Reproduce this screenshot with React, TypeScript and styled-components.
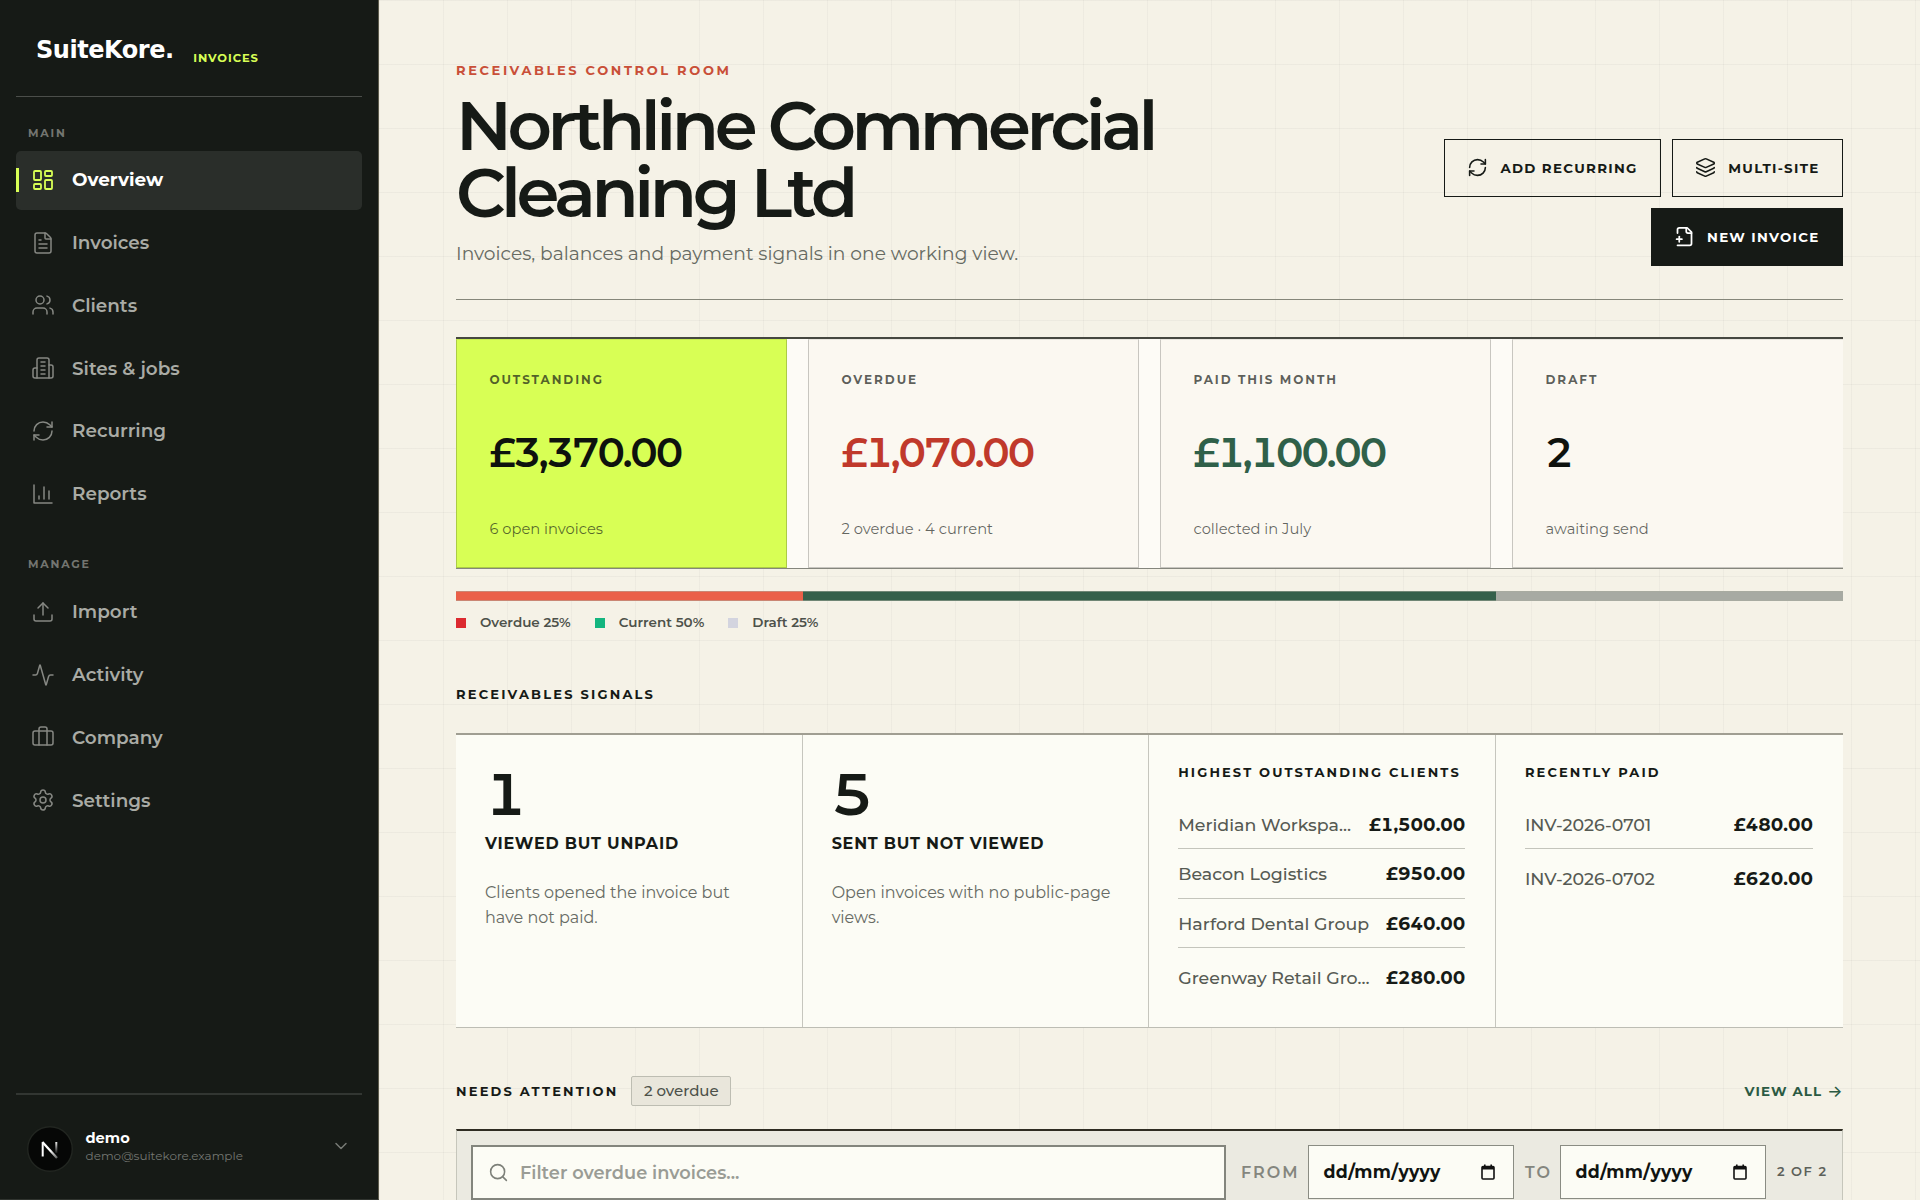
import React from "react";
import styled, { createGlobalStyle, css } from "styled-components";
import {
  Activity,
  ChevronDown,
  FileText,
  Layers,
  LayoutDashboard,
  RefreshCw,
  Search,
  Settings,
  Upload,
  Users,
} from "lucide-react";

const ink = "#161a16";
const paper = "#f5f2e7";
const lime = "#d8ff55";
const red = "#c0392b";
const green = "#2f6049";

const GlobalStyle = createGlobalStyle`
  *, *::before, *::after { box-sizing: border-box; }
  body {
    margin: 0;
    background: ${paper};
    color: ${ink};
    font-family: Montserrat, Inter, "Liberation Sans", sans-serif;
    overflow: hidden;
  }
  h1, h2, h3, p, ul { margin: 0; padding: 0; font: inherit; }
  ul { list-style: none; }
`;

const Shell = styled.div`
  display: grid;
  grid-template-columns: 379px 1fr;
  height: 1200px;
  overflow: hidden;
`;

/* ---------- sidebar ---------- */

const Sidebar = styled.aside`
  display: flex;
  flex-direction: column;
  padding: 0 16.5px 0 16px;
  background: ${ink};
  border-right: 1px solid #5d5b4c;
  border-bottom: 1px solid #30342f;
`;

const Brand = styled.div`
  display: flex;
  align-items: center;
  height: 97px;
  padding: 3px 0 0 20px;
  border-bottom: 1px solid #4b4e4a;
`;

const Wordmark = styled.span`
  font: 700 24px "DejaVu Sans", sans-serif;
  letter-spacing: -0.45px;
  color: #fff;
`;

const Product = styled.span`
  margin: 17px 0 0 19.5px;
  font-size: 11.5px;
  font-weight: 700;
  letter-spacing: 0.95px;
  color: ${lime};
`;

const Nav = styled.nav`
  display: flex;
  flex-direction: column;
`;

const NavHeading = styled.h2<{ $first?: boolean }>`
  margin: ${(p) => (p.$first ? "28px 0 9.5px 12px" : "33px 0 10.300px 12px")};
  font-size: 11px;
  font-weight: 700;
  line-height: 16px;
  letter-spacing: 1.8px;
  color: #737570;
`;

const NavList = styled.ul`
  display: flex;
  flex-direction: column;
  gap: 3.75px;
`;

const NavItem = styled.li<{ $active?: boolean }>`
  position: relative;
  display: flex;
  align-items: center;
  gap: 17px;
  height: 59px;
  padding: 0 0 0.5px 15px;
  border-radius: 5px;
  font-size: 18.4px;
  font-weight: 600;
  color: #a9aba5;

  svg {
    color: #868883;
  }

  ${(p) =>
    p.$active &&
    css`
      background: #2a2e2a;
      font-weight: 700;
      color: #fff;

      svg {
        color: ${lime};
      }

      &::before {
        content: "";
        position: absolute;
        left: 0;
        top: 17px;
        width: 3px;
        height: 24px;
        background: ${lime};
      }
    `}
`;

const Account = styled.div`
  display: flex;
  align-items: center;
  gap: 12.5px;
  height: 106px;
  margin-top: auto;
  padding: 3px 11px 0 11px;
  border-top: 2px solid #323632;
`;

const AccountText = styled.div`
  flex: 1;
  margin-top: -4px;
`;

const AccountName = styled.p`
  font-size: 14.6px;
  font-weight: 700;
  line-height: 18px;
  color: #fff;
`;

const AccountMail = styled.p`
  font-size: 12px;
  line-height: 18px;
  color: #747772;
`;

const Chevron = styled(ChevronDown)`
  margin-top: -6px;
  color: #777a75;
`;

/* ---------- main column ---------- */

const Main = styled.main`
  display: flex;
  flex-direction: column;
  padding: 61px 77.5px 0 77px;
  background-color: ${paper};
  background-image:
    linear-gradient(rgba(22, 26, 22, 0.035) 1px, transparent 1px),
    linear-gradient(90deg, rgba(22, 26, 22, 0.03) 1px, transparent 1px);
  background-size: 64px 64px;
  overflow: hidden;
`;

const PageHeader = styled.header`
  display: flex;
  flex: none;
  justify-content: space-between;
  align-items: flex-end;
  height: 239px;
  padding-bottom: 32px;
  border-bottom: 1px solid #85867a;
`;

const Titles = styled.div`
  width: 800px;
`;

const Eyebrow = styled.p`
  font-size: 13px;
  font-weight: 700;
  line-height: 18px;
  letter-spacing: 2.62px;
  color: #c94f38;
`;

const Title = styled.h1`
  margin-top: 13px;
  font-size: 69px;
  font-weight: 600;
  line-height: 67px;
  letter-spacing: -4.44px;
`;

const Subtitle = styled.p`
  margin: 14.5px 0 -1px;
  font-size: 18.65px;
  line-height: 28px;
  color: #666a62;
`;

const Actions = styled.div`
  display: flex;
  flex-wrap: wrap;
  justify-content: flex-end;
  gap: 11px;
  width: 430px;
  margin-bottom: 1px;
`;

const Button = styled.button<{ $solid?: boolean }>`
  display: flex;
  align-items: center;
  gap: 12px;
  height: 58px;
  padding: 0 22px 1px 22.5px;
  border: 1px solid ${ink};
  background: ${(p) => (p.$solid ? ink : "transparent")};
  font: 700 13.4px Montserrat, Inter, sans-serif;
  letter-spacing: 1.3px;
  color: ${(p) => (p.$solid ? "#fff" : ink)};
`;

/* ---------- stats ---------- */

const Stats = styled.section`
  display: grid;
  flex: none;
  grid-template-columns: repeat(4, 1fr);
  gap: 21.5px;
  height: 232px;
  margin-top: 37px;
  border-top: 2px solid #464740;
  border-bottom: 1px solid #85867d;
  background: #fdfbf6;
`;

const Stat = styled.article<{ $highlight?: boolean }>`
  padding: 30px 0 0 32.5px;
  border: 1px solid rgba(22, 26, 22, 0.22);
  border-top-color: rgba(22, 26, 22, 0.08);
  background: ${(p) => (p.$highlight ? lime : "#fbf8f1")};

  &:last-child {
    border-right: 0;
  }
`;

const StatLabel = styled.h3`
  font-size: 12px;
  font-weight: 700;
  line-height: 20px;
  letter-spacing: 1.95px;
  color: rgba(22, 26, 22, 0.7);
`;

const StatValue = styled.p<{ $tone?: string }>`
  margin-top: 38.7px;
  font-size: 40px;
  font-weight: 600;
  line-height: 48px;
  letter-spacing: -2.46px;
  font-variant-numeric: tabular-nums;
  color: ${(p) => p.$tone ?? "#0e120e"};
`;

const StatNote = styled.p`
  margin-top: 41px;
  font-size: 14.7px;
  line-height: 22px;
  color: rgba(22, 26, 22, 0.68);
`;

const SplitBar = styled.div`
  display: flex;
  flex: none;
  height: 10px;
  margin-top: 22px;
`;

const Split = styled.div<{ $share: number; $color: string }>`
  flex: ${(p) => p.$share};
  background: ${(p) => p.$color};
  border: solid rgba(170, 172, 160, 0.5);
  border-width: 1px 0;
`;

const Legend = styled.ul`
  display: flex;
  flex: none;
  gap: 24px;
  margin-top: 11px;
`;

const LegendItem = styled.li<{ $color: string }>`
  display: flex;
  align-items: center;
  gap: 14px;
  font-size: 13.5px;
  font-weight: 600;
  line-height: 20px;
  color: #4d514a;

  &::before {
    content: "";
    width: 10px;
    height: 10px;
    margin-top: 2px;
    background: ${(p) => p.$color};
  }
`;

/* ---------- signals ---------- */

const SectionTitle = styled.h2`
  font-size: 13px;
  font-weight: 700;
  line-height: 20px;
  letter-spacing: 2.2px;
`;

const SignalsTitle = styled(SectionTitle)`
  margin-top: 52px;
`;

const Signals = styled.section`
  display: grid;
  flex: none;
  grid-template-columns: repeat(4, 1fr);
  height: 295px;
  margin-top: 29px;
  border-top: 2px solid #a09e92;
  border-bottom: 1px solid #bdbdb4;
  background: #fcfcf5;
`;

const Signal = styled.article`
  min-width: 0;
  padding: 27px 29.5px 0 29px;
  border-right: 1px solid #c6c6be;

  &:last-child {
    border-right: 0;
  }
`;

const Count = styled.p`
  margin-top: 3px;
  font-size: 59px;
  font-weight: 600;
  line-height: 58px;
  font-variant-numeric: tabular-nums;
`;

const SignalName = styled.h3`
  margin-top: 9.5px;
  font-size: 16px;
  font-weight: 700;
  line-height: 22px;
  letter-spacing: 0.78px;
`;

const SignalText = styled.p`
  max-width: 283px;
  margin-top: 25px;
  font-size: 16px;
  line-height: 25.3px;
  color: #676b64;
`;

const ListTitle = styled(SectionTitle)`
  margin-bottom: 18px;
  letter-spacing: 2.12px;
  white-space: nowrap;
`;

const LedgerRow = styled.li`
  display: flex;
  align-items: center;
  justify-content: space-between;
  height: 49.4px;
  padding-top: 0.5px;
  border-bottom: 1px solid #c4c5bc;
  font-size: 17.4px;
  white-space: nowrap;

  &:last-child {
    height: 60.8px;
    padding: 0 0 2px;
    border-bottom: 0;
  }
`;

const LedgerName = styled.span`
  font-weight: 500;
  color: #565a53;
`;

const LedgerAmount = styled.strong`
  font-size: 17.9px;
  font-weight: 700;
  font-variant-numeric: tabular-nums;
`;

/* ---------- needs attention ---------- */

const AttentionHead = styled.div`
  display: flex;
  flex: none;
  align-items: center;
  height: 29px;
  margin-top: 48px;
`;

const Badge = styled.span`
  display: flex;
  align-items: center;
  height: 30px;
  margin-left: 13px;
  padding: 0 11.5px 1px;
  border: 1px solid #bdbdb2;
  border-radius: 2px;
  background: #e9e6db;
  font-size: 15px;
  font-weight: 500;
  color: #4d514a;
`;

const ViewAll = styled.a`
  display: flex;
  align-items: center;
  gap: 5px;
  margin-left: auto;
  font-size: 13.4px;
  font-weight: 700;
  letter-spacing: 1.1px;
  color: #2b5a43;
`;

const Arrow = styled.span`
  font: 500 16px/16px Inter, sans-serif;
  letter-spacing: 0;
`;

const FilterPanel = styled.section`
  display: flex;
  flex: none;
  align-items: flex-start;
  height: 120px;
  margin-top: 24px;
  padding: 13.5px 14px 0;
  border: 1px solid #c6c6bb;
  border-top: 2px solid #2f2c22;
  background: #ebeae1;
`;

const SearchBox = styled.label`
  display: flex;
  flex: 1;
  align-items: center;
  gap: 11px;
  height: 55px;
  padding-left: 15px;
  border: 2px solid #83857d;
  background: #fcfcf5;
  font-size: 17.8px;
  font-weight: 600;
  color: #9a9c95;

  svg {
    color: #7d8079;
  }
`;

const RangeLabel = styled.span<{ $width: number; $inset?: number }>`
  width: ${(p) => p.$width}px;
  padding-left: ${(p) => p.$inset ?? 0}px;
  font-size: 16px;
  font-weight: 600;
  line-height: 55px;
  letter-spacing: 1.95px;
  color: #84867e;
`;

const DateField = styled.div`
  display: flex;
  align-items: center;
  justify-content: space-between;
  width: 206px;
  height: 54px;
  margin-right: 11px;
  padding: 0 18px 0 14.5px;
  border: 1px solid #8a8c83;
  background: #fcfcf5;
  font-size: 17.3px;
  font-weight: 700;
  letter-spacing: 0.4px;
  color: #111411;
`;

const Tally = styled.span`
  font-size: 13px;
  font-weight: 600;
  line-height: 53px;
  letter-spacing: 1.5px;
  color: #5d615a;
`;

/* ---------- drawings ---------- */

type GlyphProps = { paths: string[]; size: number; children?: React.ReactNode; width?: number };

const Glyph = ({ paths, size, children, width = 1.5 }: GlyphProps) => (
  <svg
    width={size}
    height={size}
    viewBox="0 0 24 24"
    fill="none"
    stroke="currentColor"
    strokeWidth={width}
    strokeLinecap="round"
    strokeLinejoin="round"
  >
    {children}
    {paths.map((d) => (
      <path key={d} d={d} />
    ))}
  </svg>
);

const BuildingIcon = () => (
  <Glyph
    size={24}
    paths={[
      "M6 22V4a2 2 0 0 1 2-2h8a2 2 0 0 1 2 2v18Z",
      "M6 12H4a2 2 0 0 0-2 2v6a2 2 0 0 0 2 2h2",
      "M18 9h2a2 2 0 0 1 2 2v9a2 2 0 0 1-2 2h-2",
      "M10 6h4",
      "M10 10h4",
      "M10 14h4",
      "M10 18h4",
    ]}
  />
);

const ChartIcon = () => (
  <Glyph size={24} paths={["M3 3v18h18", "M18 17V9", "M13 17V5", "M8 17v-3"]} />
);

const CaseIcon = () => (
  <Glyph size={24} paths={["M16 20V4a2 2 0 0 0-2-2h-4a2 2 0 0 0-2 2v16"]}>
    <rect x="2" y="6" width="20" height="14" rx="2" />
  </Glyph>
);

const FilePlusIcon = () => (
  <Glyph
    size={21}
    width={2}
    paths={[
      "M4 22h14a2 2 0 0 0 2-2V7l-5-5H6a2 2 0 0 0-2 2v4",
      "M14 2v4a2 2 0 0 0 2 2h4",
      "M3 15h6",
      "M6 12v6",
    ]}
  />
);

const CalendarIcon = () => (
  <svg width="14" height="16" viewBox="0 0 14 16" fill="none">
    <rect x="1" y="2.5" width="12" height="12.5" rx="1" stroke="#111" strokeWidth="1.6" />
    <path d="M1 2h12v3.500H1zM3 .5h1.600V3H3zM9.400 .5H11V3H9.400z" fill="#111" />
  </svg>
);

const AvatarMark = () => (
  <svg width="46" height="46" viewBox="0 0 46 46" fill="none">
    <defs>
      <linearGradient id="fadeDown" x1="0" y1="15" x2="0" y2="28" gradientUnits="userSpaceOnUse">
        <stop stopColor="#fff" />
        <stop offset="1" stopColor="#fff" stopOpacity="0" />
      </linearGradient>
      <linearGradient id="fadeDiagonal" x1="24" y1="24" x2="32" y2="34" gradientUnits="userSpaceOnUse">
        <stop stopColor="#fff" />
        <stop offset="1" stopColor="#fff" stopOpacity="0.2" />
      </linearGradient>
    </defs>
    <circle cx="23" cy="23" r="22.3" fill="#060706" stroke="#222621" strokeWidth="1.4" />
    <path d="M15.700 30.500v-14" stroke="#fff" strokeWidth="2" />
    <path d="M15.400 16 30 32" stroke="url(#fadeDiagonal)" strokeWidth="2.3" />
    <path d="M29.300 16v11" stroke="url(#fadeDown)" strokeWidth="2" />
  </svg>
);

/* ---------- data ---------- */

const thin = { size: 24, strokeWidth: 1.5 };

const mainLinks = [
  { label: "Overview", icon: <LayoutDashboard size={24} strokeWidth={1.8} />, active: true },
  { label: "Invoices", icon: <FileText {...thin} /> },
  { label: "Clients", icon: <Users {...thin} /> },
  { label: "Sites & jobs", icon: <BuildingIcon /> },
  { label: "Recurring", icon: <RefreshCw {...thin} /> },
  { label: "Reports", icon: <ChartIcon /> },
];

const manageLinks = [
  { label: "Import", icon: <Upload {...thin} /> },
  { label: "Activity", icon: <Activity {...thin} /> },
  { label: "Company", icon: <CaseIcon /> },
  { label: "Settings", icon: <Settings {...thin} /> },
];

const stats = [
  { label: "OUTSTANDING", value: "£3,370.00", note: "6 open invoices", highlight: true },
  { label: "OVERDUE", value: "£1,070.00", note: "2 overdue · 4 current", tone: red },
  { label: "PAID THIS MONTH", value: "£1,100.00", note: "collected in July", tone: green },
  { label: "DRAFT", value: "2", note: "awaiting send" },
];

const split = [
  { label: "Overdue", share: 25, bar: "#ea6049", key: "#dc2a30" },
  { label: "Current", share: 50, bar: "#35604b", key: "#14b57f" },
  { label: "Draft", share: 25, bar: "#a7aaa3", key: "#d3d4df" },
];

const clients = [
  ["Meridian Workspa…", "£1,500.00"],
  ["Beacon Logistics", "£950.00"],
  ["Harford Dental Group", "£640.00"],
  ["Greenway Retail Gro…", "£280.00"],
];

const paid = [
  ["INV-2026-0701", "£480.00"],
  ["INV-2026-0702", "£620.00"],
];

const Ledger = ({ rows }: { rows: string[][] }) => (
  <ul>
    {rows.map(([name, amount]) => (
      <LedgerRow key={name}>
        <LedgerName>{name}</LedgerName>
        <LedgerAmount>{amount}</LedgerAmount>
      </LedgerRow>
    ))}
  </ul>
);

export default function App() {
  return (
    <>
      <GlobalStyle />
      <Shell>
        <Sidebar>
          <Brand>
            <Wordmark>SuiteKore.</Wordmark>
            <Product>INVOICES</Product>
          </Brand>
          <Nav>
            <NavHeading $first>MAIN</NavHeading>
            <NavList>
              {mainLinks.map((l) => (
                <NavItem key={l.label} $active={l.active}>
                  {l.icon}
                  {l.label}
                </NavItem>
              ))}
            </NavList>
            <NavHeading>MANAGE</NavHeading>
            <NavList>
              {manageLinks.map((l) => (
                <NavItem key={l.label}>
                  {l.icon}
                  {l.label}
                </NavItem>
              ))}
            </NavList>
          </Nav>
          <Account>
            <AvatarMark />
            <AccountText>
              <AccountName>demo</AccountName>
              <AccountMail>demo@suitekore.example</AccountMail>
            </AccountText>
            <Chevron size={20} strokeWidth={1.8} />
          </Account>
        </Sidebar>

        <Main>
          <PageHeader>
            <Titles>
              <Eyebrow>RECEIVABLES CONTROL ROOM</Eyebrow>
              <Title>Northline Commercial Cleaning Ltd</Title>
              <Subtitle>Invoices, balances and payment signals in one working view.</Subtitle>
            </Titles>
            <Actions>
              <Button>
                <RefreshCw size={21} strokeWidth={1.8} />
                ADD RECURRING
              </Button>
              <Button>
                <Layers size={21} strokeWidth={1.8} />
                MULTI-SITE
              </Button>
              <Button $solid>
                <FilePlusIcon />
                NEW INVOICE
              </Button>
            </Actions>
          </PageHeader>

          <Stats>
            {stats.map((s) => (
              <Stat key={s.label} $highlight={s.highlight}>
                <StatLabel>{s.label}</StatLabel>
                <StatValue $tone={s.tone}>{s.value}</StatValue>
                <StatNote>{s.note}</StatNote>
              </Stat>
            ))}
          </Stats>
          <SplitBar>
            {split.map((s) => (
              <Split key={s.label} $share={s.share} $color={s.bar} />
            ))}
          </SplitBar>
          <Legend>
            {split.map((s) => (
              <LegendItem key={s.label} $color={s.key}>
                {s.label} {s.share}%
              </LegendItem>
            ))}
          </Legend>

          <SignalsTitle>RECEIVABLES SIGNALS</SignalsTitle>
          <Signals>
            <Signal>
              <Count>1</Count>
              <SignalName>VIEWED BUT UNPAID</SignalName>
              <SignalText>Clients opened the invoice but have not paid.</SignalText>
            </Signal>
            <Signal>
              <Count>5</Count>
              <SignalName>SENT BUT NOT VIEWED</SignalName>
              <SignalText>Open invoices with no public-page views.</SignalText>
            </Signal>
            <Signal>
              <ListTitle>HIGHEST OUTSTANDING CLIENTS</ListTitle>
              <Ledger rows={clients} />
            </Signal>
            <Signal>
              <ListTitle>RECENTLY PAID</ListTitle>
              <Ledger rows={paid} />
            </Signal>
          </Signals>

          <AttentionHead>
            <SectionTitle>NEEDS ATTENTION</SectionTitle>
            <Badge>2 overdue</Badge>
            <ViewAll>
              VIEW ALL <Arrow>→</Arrow>
            </ViewAll>
          </AttentionHead>
          <FilterPanel>
            <SearchBox>
              <Search size={21} strokeWidth={1.8} />
              Filter overdue invoices...
            </SearchBox>
            <RangeLabel $width={82} $inset={15}>
              FROM
            </RangeLabel>
            <DateField>
              dd/mm/yyyy
              <CalendarIcon />
            </DateField>
            <RangeLabel $width={35}>TO</RangeLabel>
            <DateField>
              dd/mm/yyyy
              <CalendarIcon />
            </DateField>
            <Tally>2 OF 2</Tally>
          </FilterPanel>
        </Main>
      </Shell>
    </>
  );
}
